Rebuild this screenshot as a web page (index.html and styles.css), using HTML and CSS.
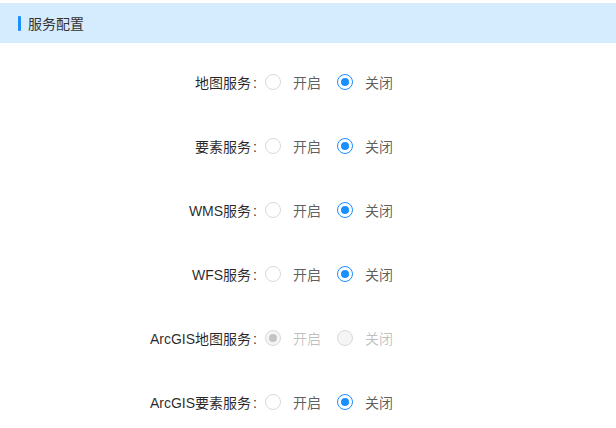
FILE: index.html
```html
<!DOCTYPE html>
<html lang="zh">
<head>
<meta charset="utf-8">
<link rel="stylesheet" href="styles.css">
</head>
<body>
<div class="page">
  <div class="section-head"><span class="bar"></span><span class="title">服务配置</span></div>
  <form class="form">
    <div class="row">
      <label class="label">地图服务</label>
      <div class="control">
        <label class="radio"><span class="circle"></span><span class="txt">开启</span></label>
        <label class="radio"><span class="circle checked"></span><span class="txt">关闭</span></label>
      </div>
    </div>
    <div class="row">
      <label class="label">要素服务</label>
      <div class="control">
        <label class="radio"><span class="circle"></span><span class="txt">开启</span></label>
        <label class="radio"><span class="circle checked"></span><span class="txt">关闭</span></label>
      </div>
    </div>
    <div class="row">
      <label class="label">WMS服务</label>
      <div class="control">
        <label class="radio"><span class="circle"></span><span class="txt">开启</span></label>
        <label class="radio"><span class="circle checked"></span><span class="txt">关闭</span></label>
      </div>
    </div>
    <div class="row">
      <label class="label">WFS服务</label>
      <div class="control">
        <label class="radio"><span class="circle"></span><span class="txt">开启</span></label>
        <label class="radio"><span class="circle checked"></span><span class="txt">关闭</span></label>
      </div>
    </div>
    <div class="row">
      <label class="label">ArcGIS地图服务</label>
      <div class="control">
        <label class="radio disabled"><span class="circle checked"></span><span class="txt">开启</span></label>
        <label class="radio disabled"><span class="circle"></span><span class="txt">关闭</span></label>
      </div>
    </div>
    <div class="row">
      <label class="label">ArcGIS要素服务</label>
      <div class="control">
        <label class="radio"><span class="circle"></span><span class="txt">开启</span></label>
        <label class="radio"><span class="circle checked"></span><span class="txt">关闭</span></label>
      </div>
    </div>
  </form>
</div>
</body>
</html>
```
FILE: styles.css
```css
html, body {
  margin: 0;
  padding: 0;
  background: #fff;
}
body {
  font-family: "Liberation Sans", Arial, "Noto Sans CJK SC", sans-serif;
  font-size: 14px;
  color: rgba(0,0,0,0.65);
}
.page {
  padding-top: 3px;
}
.section-head {
  height: 40px;
  background: #d5ecff;
  display: flex;
  align-items: center;
  padding-left: 18px;
}
.bar {
  width: 3px;
  height: 15px;
  background: #1890ff;
  margin-right: 7px;
  border-radius: 1px;
}
.title {
  color: #333;
  font-size: 14px;
}
.form {
  padding-top: 19px;
}
.row {
  display: grid;
  grid-template-columns: 265px 1fr;
  height: 40px;
  align-items: center;
  margin-bottom: 24px;
}
.label {
  text-align: right;
  color: rgba(0,0,0,0.85);
  white-space: nowrap;
}
.label::after {
  content: ":";
  margin: 0 8px 0 2px;
  position: relative;
  top: -0.5px;
}
.control {
  display: flex;
  align-items: center;
}
.radio {
  display: inline-flex;
  align-items: center;
  margin-right: 8px;
  cursor: pointer;
}
.circle {
  box-sizing: border-box;
  width: 16px;
  height: 16px;
  border: 1px solid #d9d9d9;
  border-radius: 50%;
  background: #fff;
  position: relative;
}
.circle.checked {
  border-color: #1890ff;
}
.circle.checked::after {
  content: "";
  position: absolute;
  left: 3px;
  top: 3px;
  width: 8px;
  height: 8px;
  border-radius: 50%;
  background: #1890ff;
}
.txt {
  padding: 0 8px 0 12px;
}
.disabled .circle {
  background: #f5f5f5;
  border-color: #d9d9d9;
}
.disabled .circle.checked::after {
  background: rgba(0,0,0,0.2);
}
.disabled .txt {
  color: rgba(0,0,0,0.25);
}
```
